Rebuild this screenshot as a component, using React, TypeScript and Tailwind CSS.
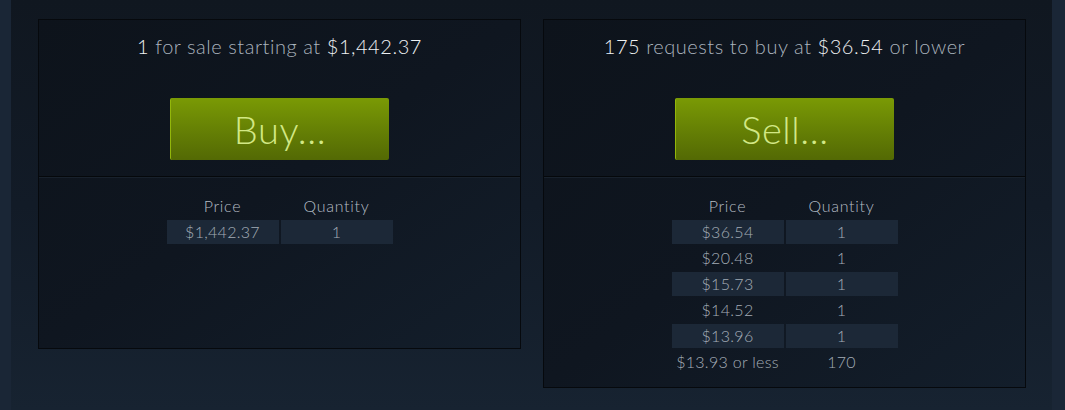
import React from "react";

const font = { fontFamily: "Lato, 'Open Sans', 'Liberation Sans', sans-serif" };

type Row = { price: string; qty: string };

function Table({ rows }: { rows: Row[] }) {
  return (
    <table className="mx-auto border-separate border-spacing-[2px] text-[16px] leading-[24px]">
      <thead>
        <tr>
          <th className="w-[112px] h-[24px] p-0 font-light text-[#b4bcc4] text-center tracking-[0.7px]">Price</th>
          <th className="w-[112px] h-[24px] p-0 font-light text-[#b4bcc4] text-center tracking-[0.7px]">Quantity</th>
        </tr>
      </thead>
      <tbody>
        {rows.map((r, i) => (
          <tr key={i}>
            <td className={`h-[24px] p-0 text-center text-[#a3acb6] font-light tracking-[0.3px] ${i % 2 === 0 && i < 5 ? "bg-[#1c2837]" : ""}`}>{r.price}</td>
            <td className={`h-[24px] p-0 text-center text-[#a3acb6] font-light tracking-[0.3px] ${i % 2 === 0 && i < 5 ? "bg-[#1c2837]" : ""}`}>{r.qty}</td>
          </tr>
        ))}
      </tbody>
    </table>
  );
}

function GreenButton({ label }: { label: string }) {
  return (
    <div className="mx-auto w-[219px] h-[62px] rounded-[2px] bg-gradient-to-b from-[#7a9a05] to-[#536904] border-l border-[#93b60a] flex items-center justify-center text-[#d2e885] text-[38px] font-light leading-none tracking-[0.6px]">
      {label}
    </div>
  );
}

function Box({ heading, button, rows, extra }: { heading: React.ReactNode; button: string; rows: Row[]; extra: string }) {
  return (
    <div className={`w-[483px] border border-[#06090d] bg-gradient-to-br from-[#0d131b] via-[#0f1620] to-[#131e2b] flex flex-col ${extra}`}>
      <div className="h-[157px] flex flex-col items-center border-b border-[#05080b]">
        <div className="mt-[13px] text-[20px] leading-[26px] font-light text-[#aab3bd] tracking-[0.55px]">{heading}</div>
        <div className="mt-[39px]">
          <GreenButton label={button} />
        </div>
      </div>
      <div className="border-t border-[#18212c] pt-[14px]">
        <Table rows={rows} />
      </div>
    </div>
  );
}

export default function App() {
  return (
    <div style={font} className="w-[1065px] h-[410px] flex bg-[#1b2838] overflow-hidden">
      <div className="w-[11px] bg-[#1a2636]" />
      <div className="flex-1 bg-gradient-to-b from-[#101720] via-[#121b27] to-[#172331] flex items-start gap-[22px] pt-[19px] pl-[27px]">
        <Box
          extra="h-[330px]"
          heading={
            <>
              <span className="text-[#eef1f3]">1</span> for sale starting at{" "}
              <span className="text-[#eef1f3]">$1,442.37</span>
            </>
          }
          button="Buy..."
          rows={[{ price: "$1,442.37", qty: "1" }]}
        />
        <Box
          extra="pb-[11px]"
          heading={
            <>
              <span className="text-[#eef1f3]">175</span> requests to buy at{" "}
              <span className="text-[#eef1f3]">$36.54</span> or lower
            </>
          }
          button="Sell..."
          rows={[
            { price: "$36.54", qty: "1" },
            { price: "$20.48", qty: "1" },
            { price: "$15.73", qty: "1" },
            { price: "$14.52", qty: "1" },
            { price: "$13.96", qty: "1" },
            { price: "$13.93 or less", qty: "170" },
          ]}
        />
      </div>
      <div className="w-[13px] bg-[#1a2636]" />
    </div>
  );
}
